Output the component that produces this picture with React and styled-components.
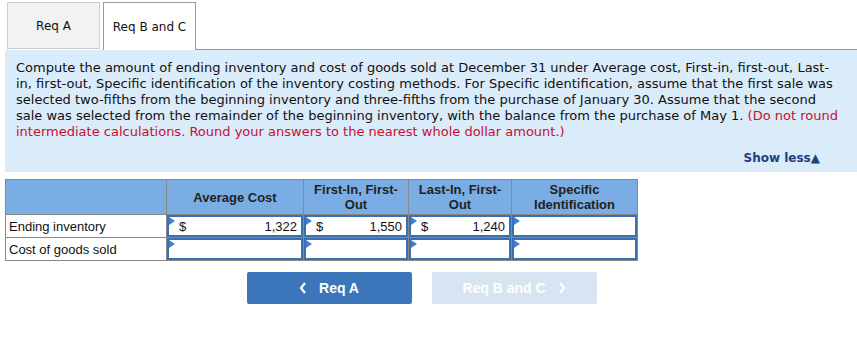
import React from 'react';
import styled, {createGlobalStyle} from 'styled-components';

const Global = createGlobalStyle`
body {
    margin: 0;
    background: #fff;
    font-family: "DejaVu Sans", Verdana, sans-serif;
}
`;

const Page = styled.div`
padding-left: 5px;
width: 852px;
`;

const TabBar = styled.div`
display: flex;
align-items: flex-end;
height: 50px;
padding-left: 2px;
`;

const Tab = styled.div`
box-sizing: border-box;
width: 93px;
margin-right: 3px;
display: flex;
align-items: center;
justify-content: center;
font-size: 12px;
color: #111;
background: ${props => props.active ? '#fff' : '#f2f2f2'};
border: 1px solid ${props => props.active ? '#999' : '#ccc'};
border-bottom: ${props => props.active ? 'none' : '1px solid #ccc'};
margin-bottom: ${props => props.active ? '0' : '1px'};
height: ${props => props.active ? 48 : 47}px;
`;

const TabFill = styled.div`
flex: 1;
border-bottom: 1px solid #999;
margin-left: -3px;
`;

const Panel = styled.div`
background: #daebf9;
padding: 10px 12px 8px 11px;
height: 122px;
box-sizing: border-box;
`;

const Prompt = styled.p`
margin: 0;
font-size: 13px;
line-height: 16px;
color: #111;
`;

const Red = styled.span`
color: #c8102e;
`;

const ShowLess = styled.div`
text-align: right;
margin-top: 11px;
padding-right: 25px;
font-size: 12px;
font-weight: bold;
color: #22407a;
`;

const Table = styled.table`
margin-top: 7px;
border-collapse: collapse;
font-family: "Liberation Sans", Arial, sans-serif;
font-size: 13px;
color: #111;
`;

const Head = styled.th`
background: #7aade4;
border: 1px solid #888;
height: 34px;
width: ${props => props.w}px;
padding: 0;
font-weight: bold;
color: #222;
line-height: 15px;
`;

const Label = styled.td`
border: 1px solid #888;
height: 21px;
padding: 0 0 0 3px;
`;

const Cell = styled.td`
border: 1px solid #888;
padding: 0;
height: 21px;
`;

const InputBox = styled.div`
position: relative;
box-sizing: border-box;
height: 22px;
border: 2px solid #3d6fb0;
background: #fff;
display: flex;
align-items: center;
justify-content: space-between;
padding: 0 4px 0 10px;
`;

const Flag = styled.span`
position: absolute;
left: 0;
top: 0;
width: 0;
height: 0;
border-top: 4px solid transparent;
border-bottom: 4px solid transparent;
border-left: 6px solid #3d7fd0;
`;

const Buttons = styled.div`
display: flex;
justify-content: center;
gap: 20px;
margin-top: 11px;
padding-right: 19px;
`;

const NavButton = styled.button`
width: 165px;
height: 32px;
border: none;
border-radius: 2px;
background: ${props => props.disabled ? '#d8e4f2' : '#3b76ba'};
color: #fff;
font-family: "Liberation Sans", Arial, sans-serif;
font-size: 14px;
font-weight: bold;
display: flex;
align-items: center;
justify-content: center;
gap: 12px;
padding: 0;
`;

const Chevron = ({dir}) => (
    <svg width='8' height='12' viewBox='0 0 8 12'>
        <path d={dir === 'left' ? 'M6 1 L2 6 L6 11' : 'M2 1 L6 6 L2 11'} fill='none' stroke='#fff' strokeWidth='2.2' />
    </svg>
);

const Money = ({value}) => (
    <InputBox>
        <Flag />
        {value && <span>$</span>}
        {value && <span>{value}</span>}
    </InputBox>
);

const App = () => {

    return (
        <Page>
            <Global />
            <TabBar>
                <Tab>Req A</Tab>
                <Tab active>Req B and C</Tab>
                <TabFill />
            </TabBar>

            <Panel>
                <Prompt>
                    Compute the amount of ending inventory and cost of goods sold at December 31 under Average cost, First-in, first-out, Last-in, first-out, Specific identification of the inventory costing methods. For Specific identification, assume that the first sale was selected two-fifths from the beginning inventory and three-fifths from the purchase of January 30. Assume that the second sale was selected from the remainder of the beginning inventory, with the balance from the purchase of May 1. <Red>(Do not round intermediate calculations. Round your answers to the nearest whole dollar amount.)</Red>
                </Prompt>
                <ShowLess>Show less▲</ShowLess>
            </Panel>

            <Table>
                <thead>
                    <tr>
                        <Head w={160}></Head>
                        <Head w={136}>Average Cost</Head>
                        <Head w={104}>First-In, First-<br />Out</Head>
                        <Head w={102}>Last-In, First-<br />Out</Head>
                        <Head w={125}>Specific<br />Identification</Head>
                    </tr>
                </thead>
                <tbody>
                    <tr>
                        <Label>Ending inventory</Label>
                        <Cell><Money value='1,322' /></Cell>
                        <Cell><Money value='1,550' /></Cell>
                        <Cell><Money value='1,240' /></Cell>
                        <Cell><Money /></Cell>
                    </tr>
                    <tr>
                        <Label>Cost of goods sold</Label>
                        <Cell><Money /></Cell>
                        <Cell><Money /></Cell>
                        <Cell><Money /></Cell>
                        <Cell><Money /></Cell>
                    </tr>
                </tbody>
            </Table>

            <Buttons>
                <NavButton><Chevron dir='left' />Req A</NavButton>
                <NavButton disabled>Req B and C<Chevron dir='right' /></NavButton>
            </Buttons>
        </Page>
    );
};

export default App;
